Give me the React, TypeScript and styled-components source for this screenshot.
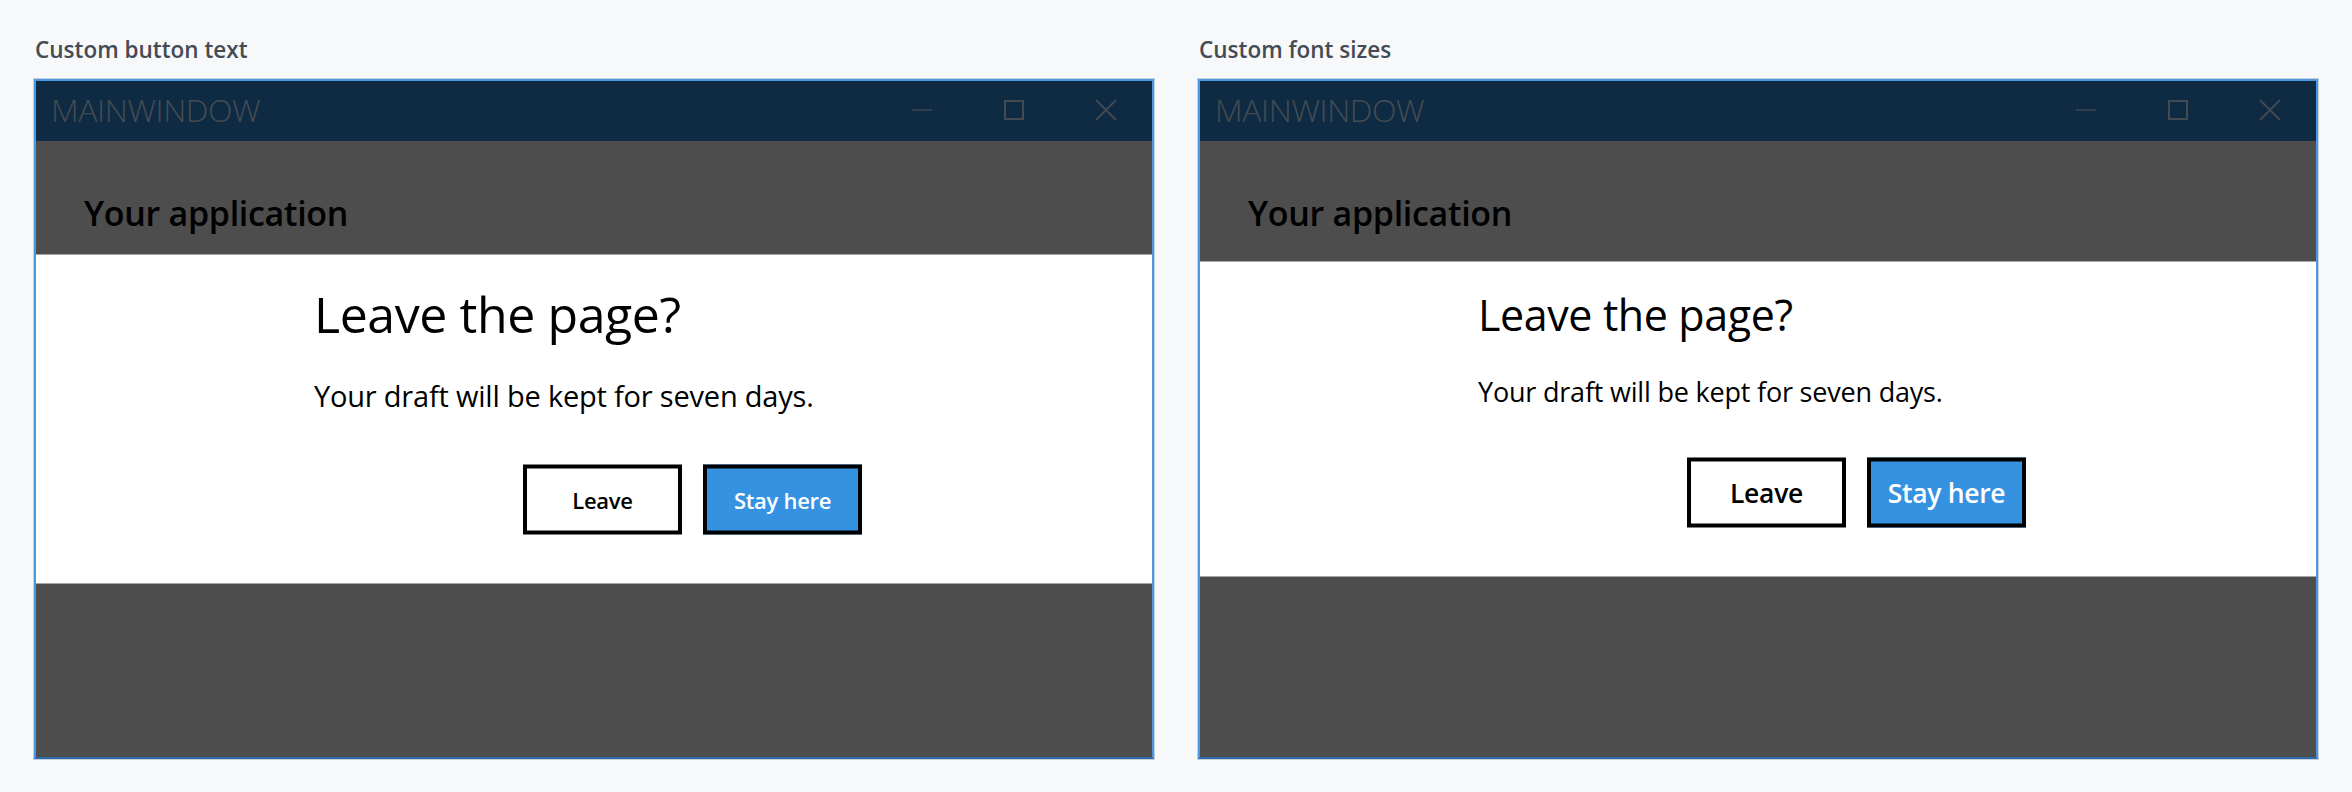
import React from "react";
import styled, { createGlobalStyle } from "styled-components";

const GlobalStyle = createGlobalStyle`
  html, body { margin: 0; padding: 0; background: #f7f8fa; }
  body { font-family: "Open Sans", "Noto Sans", sans-serif; }
  * { box-sizing: border-box; }
`;

const Page = styled.div`
  display: grid;
  grid-template-columns: 1120px 1120px;
  column-gap: 44px;
  padding: 35px 34px 0 34px;
  width: 2352px;
  height: 792px;
`;

const Section = styled.section`
  display: flex;
  flex-direction: column;
`;

const Label = styled.div`
  font-family: "Open Sans", "Noto Sans", sans-serif;
  font-weight: 600;
  font-size: 22.5px;
  line-height: 30px;
  color: #444b54;
  padding-left: 1px;
  margin-bottom: 14px;
`;

const Window = styled.div`
  position: relative;
  height: 680px;
  display: flex;
  flex-direction: column;
  border: 2px solid #4a98e2;
  border-bottom-color: #2a6bad;
  box-shadow: 0 0 0 1px #c8ced5;
  background: #4d4d4d;
`;

const TitleBar = styled.div`
  height: 60px;
  flex: none;
  display: flex;
  align-items: center;
  background: #0f2b43;
  padding: 0 0 3px 15px;
`;

const TitleText = styled.div`
  flex: 1;
  font-family: "Open Sans", "Noto Sans", sans-serif;
  font-weight: 300;
  font-size: 32px;
  letter-spacing: -0.4px;
  color: #454b51;
`;

const Controls = styled.div`
  display: flex;
  height: 100%;
`;

const ControlButton = styled.div`
  width: 92px;
  height: 100%;
  display: flex;
  align-items: center;
  justify-content: center;
  color: #434a51;
`;

const AppBody = styled.div`
  flex: 1;
  background: #4d4d4d;
  padding: 50px 0 0 48px;
`;

const AppTitle = styled.h1`
  margin: 0;
  font-family: "Open Sans", "Noto Sans", sans-serif;
  font-weight: 600;
  font-size: 34px;
  line-height: 44px;
  color: #000;
  letter-spacing: -0.3px;
`;

const Overlay = styled.div`
  position: absolute;
  left: 0;
  right: 0;
  top: 50%;
  transform: translateY(-50%);
  background: #ffffff;
  display: flex;
  padding-left: 278px;
`;

const DialogColumn = styled.div<{ $padTop: number }>`
  width: 548px;
  display: flex;
  flex-direction: column;
  padding: ${(p) => p.$padTop}px 0 49px 0;
`;

const DialogTitle = styled.h2<{ $size: number }>`
  margin: 0;
  font-family: "Open Sans", "Noto Sans", sans-serif;
  font-weight: 400;
  font-size: ${(p) => p.$size}px;
  line-height: ${(p) => Math.round(p.$size * 1.22)}px;
  letter-spacing: -0.4px;
  color: #000;
  white-space: nowrap;
`;

const DialogText = styled.p<{ $size: number; $gap: number }>`
  margin: ${(p) => p.$gap}px 0 0 0;
  font-family: "Open Sans", "Noto Sans", sans-serif;
  font-weight: 400;
  font-size: ${(p) => p.$size}px;
  line-height: ${(p) => Math.round(p.$size * 1.3)}px;
  letter-spacing: -0.2px;
  color: #000;
  white-space: nowrap;
`;

const ButtonRow = styled.div<{ $gap: number }>`
  display: flex;
  justify-content: flex-end;
  gap: 21px;
  margin-top: ${(p) => p.$gap}px;
`;

const DialogButton = styled.button<{ $primary?: boolean; $size: number }>`
  width: 159px;
  height: 70px;
  border: 4px solid #000;
  border-radius: 0;
  background: ${(p) => (p.$primary ? "#3592e0" : "#ffffff")};
  color: ${(p) => (p.$primary ? "#ffffff" : "#000000")};
  font-family: "Open Sans", "Noto Sans", sans-serif;
  font-weight: 600;
  font-size: ${(p) => p.$size}px;
  letter-spacing: -0.3px;
  padding: 0;
  display: flex;
  align-items: center;
  justify-content: center;
  cursor: pointer;
`;

const MinimizeIcon = () => (
  <svg width="22" height="22" viewBox="0 0 22 22" fill="none">
    <line x1="1" y1="11" x2="21" y2="11" stroke="currentColor" strokeWidth="1.4" />
  </svg>
);

const MaximizeIcon = () => (
  <svg width="22" height="22" viewBox="0 0 22 22" fill="none">
    <rect x="2" y="2" width="18" height="18" stroke="currentColor" strokeWidth="2" />
  </svg>
);

const CloseIcon = () => (
  <svg width="22" height="22" viewBox="0 0 22 22" fill="none">
    <path d="M1 1 L21 21 M21 1 L1 21" stroke="currentColor" strokeWidth="1.8" />
  </svg>
);

type DemoProps = {
  label: string;
  titleSize: number;
  textSize: number;
  buttonSize: number;
  padTop: number;
  textGap: number;
  buttonGap: number;
};

const Demo = ({ label, titleSize, textSize, buttonSize, padTop, textGap, buttonGap }: DemoProps) => (
  <Section>
    <Label>{label}</Label>
    <Window>
      <TitleBar>
        <TitleText>MAINWINDOW</TitleText>
        <Controls>
          <ControlButton>
            <MinimizeIcon />
          </ControlButton>
          <ControlButton>
            <MaximizeIcon />
          </ControlButton>
          <ControlButton>
            <CloseIcon />
          </ControlButton>
        </Controls>
      </TitleBar>
      <AppBody>
        <AppTitle>Your application</AppTitle>
      </AppBody>
      <Overlay>
        <DialogColumn $padTop={padTop}>
          <DialogTitle $size={titleSize}>Leave the page?</DialogTitle>
          <DialogText $size={textSize} $gap={textGap}>
            Your draft will be kept for seven days.
          </DialogText>
          <ButtonRow $gap={buttonGap}>
            <DialogButton $size={buttonSize}>Leave</DialogButton>
            <DialogButton $primary $size={buttonSize}>
              Stay here
            </DialogButton>
          </ButtonRow>
        </DialogColumn>
      </Overlay>
    </Window>
  </Section>
);

export default function App() {
  return (
    <>
      <GlobalStyle />
      <Page>
        <Demo
          label="Custom button text"
          titleSize={50}
          textSize={29}
          buttonSize={22}
          padTop={29}
          textGap={32}
          buttonGap={50}
        />
        <Demo
          label="Custom font sizes"
          titleSize={43}
          textSize={27}
          buttonSize={26.5}
          padTop={27}
          textGap={33}
          buttonGap={49}
        />
      </Page>
    </>
  );
}
